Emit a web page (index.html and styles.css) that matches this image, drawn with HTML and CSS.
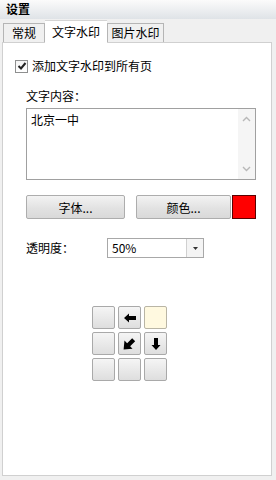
FILE: index.html
```html
<!DOCTYPE html>
<html lang="zh-CN">

<head>
    <meta charset="UTF-8">
    <title>设置</title>
    <link rel="stylesheet" href="styles.css">
</head>

<body>
    <div class="titlebar">设置</div>

    <div class="tabs">
        <div class="tab">常规</div>
        <div class="tab active">文字水印</div>
        <div class="tab">图片水印</div>
    </div>

    <div class="panel">
        <!-- 复选框 -->
        <label class="check-row">
            <span class="checkbox">
                <svg width="10" height="10" viewBox="0 0 10 10">
                    <path d="M1.5 5 L4 7.5 L8.5 2" fill="none" stroke="#222" stroke-width="2"/>
                </svg>
            </span>
            添加文字水印到所有页
        </label>

        <div class="field-label">文字内容：</div>
        <div class="textbox">
            <div class="textbox-text">北京一中</div>
            <div class="scrollbar">
                <svg width="9" height="6" viewBox="0 0 9 6"><path d="M1 5 L4.5 1.5 L8 5" fill="none" stroke="#b8b8b8" stroke-width="1.4"/></svg>
                <svg width="9" height="6" viewBox="0 0 9 6"><path d="M1 1 L4.5 4.5 L8 1" fill="none" stroke="#b8b8b8" stroke-width="1.4"/></svg>
            </div>
        </div>

        <div class="button-row">
            <button class="btn btn-font">字体...</button>
            <button class="btn btn-color">颜色...</button>
            <span class="swatch"></span>
        </div>

        <div class="opacity-row">
            <span class="opacity-label">透明度：</span>
            <div class="select">
                <span class="select-value">50%</span>
                <span class="select-arrow">
                    <svg width="5" height="3" viewBox="0 0 5 3"><path d="M0 0 H5 L2.5 3 Z" fill="#333"/></svg>
                </span>
            </div>
        </div>

        <!-- 位置选择 -->
        <div class="position-grid">
            <span class="cell"></span>
            <span class="cell">
                <svg width="14" height="12" viewBox="0 0 14 12"><path d="M1 6 L6 1.5 V4 H13 V8 H6 V10.5 Z" fill="#000"/></svg>
            </span>
            <span class="cell selected"></span>
            <span class="cell"></span>
            <span class="cell">
                <svg width="15" height="15" viewBox="0 0 14 14"><path d="M1.5 12.5 L2.3 4.3 L4.8 6.8 L9.5 2 L12.3 4.8 L7.6 9.5 L9.8 11.8 Z" fill="#000"/></svg>
            </span>
            <span class="cell">
                <svg width="12" height="14" viewBox="0 0 12 14"><path d="M6 13 L1.5 8 H4 V1 H8 V8 H10.5 Z" fill="#000"/></svg>
            </span>
            <span class="cell"></span>
            <span class="cell"></span>
            <span class="cell"></span>
        </div>
    </div>
</body>

</html>
```

FILE: styles.css
```css
body {
    margin: 0;
    padding: 0;
    width: 276px;
    height: 480px;
    background-color: #f0f0f0;
    font-family: "Noto Sans CJK SC", "Liberation Sans", sans-serif;
    font-size: 12px;
    line-height: 14px;
    color: #000;
    overflow: hidden;
}

.titlebar {
    height: 19px;
    line-height: 18px;
    padding-left: 6px;
    font-weight: bold;
    font-size: 12px;
    background: linear-gradient(#fbfbfb, #dfe3e7);
}

.tabs {
    display: flex;
    align-items: flex-end;
    height: 23px;
    padding-left: 3px;
}

.tab {
    height: 19px;
    line-height: 18px;
    border: 1px solid #b5b5b5;
    border-bottom: none;
    background-color: #f0f0f0;
    padding: 0;
    box-sizing: border-box;
    text-align: center;
    white-space: nowrap;
}

.tab:first-child {
    width: 42px;
}

.tab.active {
    width: 62px;
    height: 23px;
    line-height: 21px;
    background-color: #fff;
    border-color: #d4d4d4;
    margin-bottom: -1px;
    position: relative;
    z-index: 1;
    border-right: none;
    border-left: none;
}

.tab:last-child {
    width: 57px;
}

.panel {
    margin: 0 4px 0 2px;
    height: 434px;
    background-color: #fff;
    border: 1px solid #d0d0d0;
    box-sizing: border-box;
    padding: 16px 15px 0 23px;
}

.check-row {
    display: flex;
    align-items: center;
    gap: 4px;
    height: 14px;
    margin-left: -11px;
}

.checkbox {
    width: 11px;
    height: 11px;
    border: 1px solid #8e8f8f;
    background: linear-gradient(#f4f4f4, #fff);
    display: flex;
    align-items: center;
    justify-content: center;
}

.field-label {
    margin-top: 16px;
    height: 14px;
}

.textbox {
    margin-top: 5px;
    height: 72px;
    border: 1px solid #a0a0a0;
    box-sizing: border-box;
    display: flex;
}

.textbox-text {
    flex: 1;
    padding: 4px 4px;
}

.scrollbar {
    width: 17px;
    background-color: #f5f5f5;
    display: flex;
    flex-direction: column;
    justify-content: space-between;
    align-items: center;
    padding: 7px 0;
}

.button-row {
    display: flex;
    margin-top: 15px;
    height: 24px;
}

.btn {
    font-family: inherit;
    font-size: 12px;
    height: 24px;
    border: 1px solid #adadad;
    border-radius: 2px;
    background: linear-gradient(#f3f3f3, #e2e2e2 55%, #d9d9d9);
    padding: 0;
    color: #000;
}

.btn-font {
    width: 99px;
}

.btn-color {
    width: 95px;
    margin-left: 11px;
}

.swatch {
    width: 24px;
    height: 24px;
    margin-left: 1px;
    background-color: #ff0000;
    border: 1px solid #5a0000;
    box-sizing: border-box;
}

.opacity-row {
    display: flex;
    align-items: center;
    margin-top: 19px;
    height: 20px;
}

.opacity-label {
    width: 81px;
}

.select {
    width: 97px;
    height: 20px;
    border: 1px solid #a8a8a8;
    box-sizing: border-box;
    display: flex;
}

.select-value {
    flex: 1;
    line-height: 18px;
    padding-left: 4px;
}

.select-arrow {
    width: 16px;
    border-left: 1px solid #d0d0d0;
    background-color: #f4f4f4;
    display: flex;
    align-items: center;
    justify-content: center;
}

.position-grid {
    display: grid;
    grid-template-columns: repeat(3, 23px);
    grid-template-rows: repeat(3, 23px);
    gap: 3px;
    margin: 48px 0 0 66px;
}

.cell {
    border: 1px solid #a9a9a9;
    border-radius: 2px;
    background: linear-gradient(#f5f5f5, #dedede);
    display: flex;
    align-items: center;
    justify-content: center;
}

.cell.selected {
    background: #fff9e0;
    border-color: #b9b5a5;
}
```
